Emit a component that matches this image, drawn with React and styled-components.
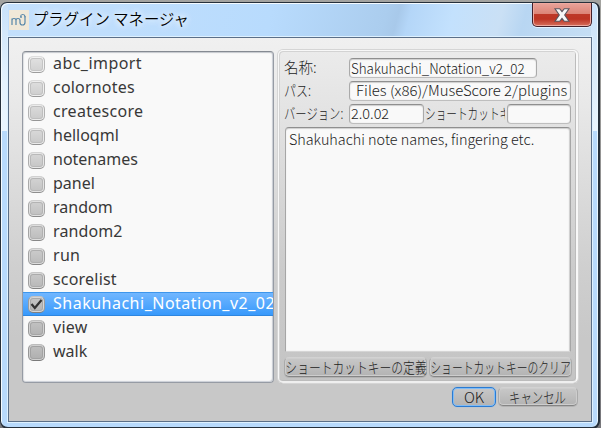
import React from "react";
import styled, { createGlobalStyle, css } from "styled-components";

const Global = createGlobalStyle`
  * { box-sizing: border-box; }
  html, body { margin: 0; padding: 0; overflow: hidden; background: #a3a3a0; }
`;

const Window = styled.div`
  width: 601px;
  height: 428px;
  padding: 2px 1px 0 0;
  overflow: hidden;
  background: linear-gradient(#a3a3a0, #a3a3a0 20px, #77777b);
`;

const Frame = styled.div`
  width: 600px;
  height: 427px;
  display: flex;
  flex-direction: column;
  padding: 0 6px 0 6px;
  border: solid #26303b;
  border-width: 1px 2px 2px 1px;
  border-radius: 7px 7px 8px 8px;
  box-shadow: inset 1px 1px 0 #f5fbff, inset -1px 0 0 #e9f7ff;
  background:
    linear-gradient(#c9e2fa 0, #e5f2fd 80px, #eaf5fe 128px, transparent 128px) left / 7px 100% no-repeat,
    linear-gradient(#c9e2fa 0, #dcedfb 80px, #eaf5fe 128px, transparent 128px) right / 7px 100% no-repeat,
    linear-gradient(105deg, #c4e0fc 0, #b8dbfd 45%, #abcdee 64%, #a8c9ea 66%, #b4d6f8 68%, #c3e1fd 75%, #cae0f5 83%, #b8d6f2 87%, #c7dff4 100%) top / 100% 35px no-repeat,
    #b8dafc;
`;

const TitleBar = styled.header`
  height: 34px;
  display: flex;
  align-items: flex-start;
  padding: 7px 0 0 2px;
`;

const AppIcon = styled.svg`
  width: 20px;
  height: 20px;
  flex: none;
`;

const Title = styled.h1`
  margin: -2px 0 0 4px;
  font: 350 16px/20px "Noto Sans CJK JP", sans-serif;
  color: #000;
  white-space: pre;
  transform: scaleX(0.96);
  transform-origin: left;
  text-shadow: 0 0 8px #fff, 0 0 8px #fff;
`;

const CloseButton = styled.button`
  width: 60px;
  height: 24px;
  margin: -7px 0 0 auto;
  padding: 0;
  display: flex;
  justify-content: center;
  align-items: center;
  border: 1px solid #43202a;
  border-top: 0;
  border-radius: 0 0 5px 5px;
  box-shadow: inset 0 0 0 1px #eeaaa0, 0 1px 0 #e4f2ff;
  background: linear-gradient(#e8a49b 0, #dc8578 46%, #bd3828 50%, #bd3424 70%, #d6705d 100%);
`;

const Client = styled.main`
  height: 385px;
  margin: 0 0 0 1px;
  flex: none;
  border: 1px solid #5b6f88;
  padding: 12px 13px 0 13px;
  background: linear-gradient(#f0f0f0 0, #eaeaea 55px, #cfcfcf 230px, #c8c8c8 300px);
  box-shadow: 0 0 0 1px #def1ff;
`;

const Columns = styled.div`
  display: flex;
  gap: 4px;
  height: 334px;
`;

const PluginList = styled.ul`
  width: 252px;
  height: 332px;
  margin: 1px 0 0;
  padding: 0;
  list-style: none;
  overflow: hidden;
  border: 1px solid #969ba4;
  border-top-color: #858a92;
  border-radius: 4px;
  background: #f9f9f9;
  box-shadow: inset 0 1px 1px #c5c8cc, inset 1px 0 1px #dfe1e4, inset -1px -1px 1px #c8cdd3;
`;

const PluginRow = styled.li`
  height: 24px;
  display: flex;
  align-items: center;
  padding-left: 5px;
  font: 400 16px/24px "Noto Sans", sans-serif;
  letter-spacing: ${(p) => p.$track}px;
  white-space: nowrap;
  color: ${(p) => (p.$selected ? "#fff" : "#383838")};
  ${(p) => p.$selected && css`
    background: linear-gradient(#74b8ff, #3598fb);
    box-shadow: inset 0 1px 0 #3d96ec, inset 0 -1px 0 #2e86df;
  `}
`;

const PluginName = styled.span`
  margin-top: -2px;
`;

const grey = (v) => `rgb(${v}, ${v}, ${v})`;

const CheckBox = styled.span`
  flex: none;
  width: 17px;
  height: 17px;
  margin: 0 8px 0 0;
  display: flex;
  align-items: center;
  justify-content: center;
  border: 1px solid ${(p) => grey(p.$tone - 38)};
  border-top-color: ${(p) => grey(p.$tone)};
  border-bottom-color: ${(p) => grey(p.$tone - 66)};
  border-radius: 5px;
  box-shadow: inset 0 0 0 1px ${(p) => grey(p.$tone + 20)}, inset 0 0 0 2px ${(p) => grey(p.$tone - 26)};
  background: linear-gradient(${(p) => grey(p.$tone + 4)}, ${(p) => grey(p.$tone - 14)});
`;

const Details = styled.section`
  width: 300px;
  height: 333px;
  padding: 7px 5px 0 6px;
  border: 1px solid #f8f8f8;
  border-right-width: 2px;
  border-bottom: 2px solid #efefef;
  border-radius: 5px;
  box-shadow: 0 0 0 1px #d5d5d5, 0 1px 0 0 #969696, inset 1px 1px 0 #d3d3d3, inset -1px -1px 0 #bcbcbc;
  background: linear-gradient(#ebebeb 0, #e2e2e2 70px, #cbcbcb 220px, #c4c4c4);
`;

const FieldRow = styled.div`
  display: flex;
  height: 20px;
  margin-bottom: 3px;
`;

const Fit = styled.span`
  display: inline-block;
  flex: none;
  font-family: "Noto Sans CJK JP", sans-serif;
  font-weight: 300;
  font-size: ${(p) => p.$size || 14}px;
  line-height: ${(p) => p.$line || 18}px;
  color: #1c1c1c;
  white-space: pre;
  transform: scaleX(${(p) => p.$scale || 1});
  transform-origin: ${(p) => p.$origin || "left"};
`;

const Label = styled.label`
  width: ${(p) => p.$width}px;
  flex: none;
  display: flex;
  overflow: ${(p) => (p.$clip ? "hidden" : "visible")};
  margin-left: ${(p) => p.$shift || 0}px;
`;

const Field = styled.div`
  width: ${(p) => p.$width}px;
  height: 20px;
  flex: none;
  display: flex;
  justify-content: ${(p) => (p.$end ? "flex-end" : "flex-start")};
  padding: 0 3px 0 1px;
  border: 1px solid #aaa;
  border-top-color: #8f8f8f;
  border-bottom-color: #bebebe;
  border-radius: 4px;
  background: #f9f9f9;
  box-shadow: inset 0 1px 1px #cfcfcf, inset 0 0 1px #ccc;
`;

const Description = styled.div`
  width: 286px;
  height: 225px;
  padding: 2px 3px;
  border: 1px solid #a6a6a6;
  border-top: 1px solid #8f8f8f;
  border-bottom-color: #d5d5d5;
  border-radius: 4px 4px 0 0;
  background: #f9f9f9;
  box-shadow: inset 0 1px 1px #cfcfcf, inset -1px 0 1px #ccc;
`;

const ButtonRow = styled.div`
  display: flex;
  gap: 2px;
  justify-content: ${(p) => (p.$end ? "flex-end" : "flex-start")};
  margin: ${(p) => p.$margin};
`;

const Button = styled.button`
  width: ${(p) => p.$width}px;
  height: ${(p) => p.$height || 19}px;
  padding: 0;
  display: flex;
  justify-content: center;
  align-items: center;
  border: 1px solid ${(p) => (p.$default ? "#2a7bd2" : "#aaa")};
  border-top-color: ${(p) => (p.$default ? "#2a7bd2" : "#d2d2d2")};
  border-bottom-color: ${(p) => (p.$default ? "#2a7bd2" : "#858585")};
  border-radius: 5px;
  box-shadow: ${(p) => (p.$default ? "inset 0 0 0 1px #80bbf5, 0 0 1px #6caeee" : "inset 0 0 0 1px #cdcdcd, 0 1px 0 #b2b2b2")};
  background: linear-gradient(#c8c8c8, #b3b3b3);
`;

const plugins = [
  ["abc_import", 0.45], ["colornotes", 0.2], ["createscore", 0.3], ["helloqml", 0],
  ["notenames", 0], ["panel", 0], ["random", 0], ["random2", 0.1], ["run", 0.3],
  ["scorelist", 0.2], ["Shakuhachi_Notation_v2_02", 0.5], ["view", 0.3], ["walk", 0],
];
const selected = 10;

export default function App() {
  return (
    <Window>
      <Global />
      <Frame>
        <TitleBar>
          <AppIcon viewBox="0 0 20 20">
            <rect width="20" height="20" fill="#f0e8d8" />
            <path d="M3 15V8.500M3 10.500q0-2 2-2t2 2V15M7 10.500q0-2 2-2t2 2v2q0 2.500 2.500 2.500t2.500-2.500V8M11.500 6.500q.3-2 2.300-2t2.200 2" fill="none" stroke="#5686a9" strokeWidth="1.200" />
            <circle cx="12" cy="7" r=".9" fill="#5686a9" />
            <circle cx="16" cy="7" r=".9" fill="#5686a9" />
          </AppIcon>
          <Title>プラグイン マネージャ</Title>
          <CloseButton aria-label="閉じる">
            <svg width="16" height="14" viewBox="0 0 16 14">
              <path d="M1 .7h4.700L8 3.600 10.300.7H15L10.700 7l4.300 6.300h-4.700L8 10.400 5.700 13.300H1L5.300 7z" fill="#f7f7f7" stroke="#58535c" strokeWidth="1.100" />
            </svg>
          </CloseButton>
        </TitleBar>
        <Client>
          <Columns>
            <PluginList>
              {plugins.map(([name, track], i) => (
                <PluginRow key={name} $selected={i === selected} $track={track}>
                  <CheckBox $tone={222 - Math.round(i * 2.8)}>
                    {i === selected && (
                      <svg width="13" height="12" viewBox="0 0 13 12">
                        <path d="M1.500 6l3.300 4L11.500 2" fill="none" stroke="#333" strokeWidth="2.200" />
                      </svg>
                    )}
                  </CheckBox>
                  <PluginName>{name}</PluginName>
                </PluginRow>
              ))}
            </PluginList>
            <Details>
              <FieldRow>
                <Label $width={65} $shift={-1}><Fit $size={15} $scale={0.97}>名称:</Fit></Label>
                <Field $width={188}><Fit $scale={0.955}>Shakuhachi_Notation_v2_02</Fit></Field>
              </FieldRow>
              <FieldRow>
                <Label $width={65} $shift={-1}><Fit $size={15} $scale={0.8}>パス:</Fit></Label>
                <Field $width={222} $end><Fit $line={17} $scale={1.065} $origin="right">Files (x86)/MuseScore 2/plugins</Fit></Field>
              </FieldRow>
              <FieldRow>
                <Label $width={65} $shift={-1}><Fit $size={15} $scale={0.755}>バージョン:</Fit></Label>
                <Field $width={75}><Fit $line={17} $scale={1.03}>2.0.02</Fit></Field>
                <Label $width={80} $shift={1} $clip><Fit $size={15} $scale={0.71}>ショートカットキー:</Fit></Label>
                <Field as={ShortcutField} />
              </FieldRow>
              <Description><Fit $scale={1.025}>Shakuhachi note names, fingering etc.</Fit></Description>
              <ButtonRow $margin="5px -1px 0 -1px">
                <Button $width={143} $height={20}><Fit $size={15} $scale={0.785} $origin="center">ショートカットキーの定義</Fit></Button>
                <Button $width={143} $height={20}><Fit $size={15} $scale={0.72} $origin="center">ショートカットキーのクリア</Fit></Button>
              </ButtonRow>
            </Details>
          </Columns>
          <ButtonRow $end $margin="3px 0 0">
            <Button $width={44} $height={20} $default><Fit $size={15}>OK</Fit></Button>
            <Button $width={80}><Fit $size={15} $scale={0.76} $origin="center">キャンセル</Fit></Button>
          </ButtonRow>
        </Client>
      </Frame>
    </Window>
  );
}

function ShortcutField() {
  return <ShortcutBox $width={64} />;
}

const ShortcutBox = styled(Field)`
  margin-left: 2px;
`;
